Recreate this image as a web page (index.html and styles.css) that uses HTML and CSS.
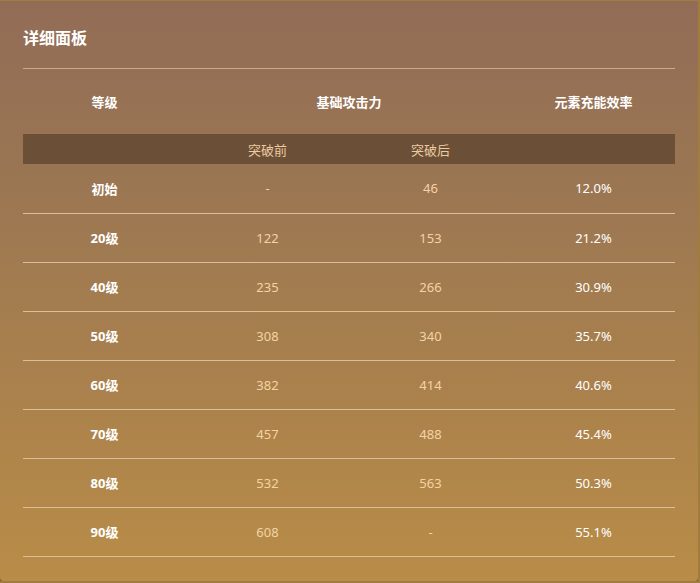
FILE: index.html
```html
<!DOCTYPE html>
<html lang="zh-CN">
<head>
    <meta charset="UTF-8">
    <meta name="viewport" content="width=device-width, initial-scale=1.0">
    <title>详细面板</title>
    <link rel="stylesheet" href="styles.css">
</head>
<body>

    <div class="panel">
        <h2>详细面板</h2>

        <table class="stats">
            <thead>
                <tr class="head">
                    <th>等级</th>
                    <th colspan="2">基础攻击力</th>
                    <th>元素充能效率</th>
                </tr>
                <tr class="sub">
                    <th></th>
                    <th>突破前</th>
                    <th>突破后</th>
                    <th></th>
                </tr>
            </thead>
            <tbody>
                <tr><td class="lv">初始</td><td class="atk">-</td><td class="atk">46</td><td class="er">12.0%</td></tr>
                <tr><td class="lv">20级</td><td class="atk">122</td><td class="atk">153</td><td class="er">21.2%</td></tr>
                <tr><td class="lv">40级</td><td class="atk">235</td><td class="atk">266</td><td class="er">30.9%</td></tr>
                <tr><td class="lv">50级</td><td class="atk">308</td><td class="atk">340</td><td class="er">35.7%</td></tr>
                <tr><td class="lv">60级</td><td class="atk">382</td><td class="atk">414</td><td class="er">40.6%</td></tr>
                <tr><td class="lv">70级</td><td class="atk">457</td><td class="atk">488</td><td class="er">45.4%</td></tr>
                <tr><td class="lv">80级</td><td class="atk">532</td><td class="atk">563</td><td class="er">50.3%</td></tr>
                <tr><td class="lv">90级</td><td class="atk">608</td><td class="atk">-</td><td class="er">55.1%</td></tr>
            </tbody>
        </table>
    </div>

</body>
</html>
```

FILE: styles.css
```css
/* Styling */
* {
    box-sizing: border-box;
    margin: 0;
    padding: 0;
}
body {
    font-family: "Noto Sans", "Noto Sans CJK SC", sans-serif;
    background-color: #a07c3e;
    padding-top: 1px;
}
.panel {
    width: 698px;
    height: 580px;
    padding: 20px 23px 0 23px;
    background: linear-gradient(to bottom, #926c56 0%, #9c7752 35%, #b98c47 100%);
    border-radius: 0 0 4px 4px;
    box-shadow: 0 2px 0 #7a5838;
}
h2 {
    color: #ffffff;
    font-size: 16px;
    font-weight: 700;
    line-height: 34px;
    height: 48px;
    border-bottom: 1px solid #c8aa8e;
}
.stats {
    width: 100%;
    border-collapse: collapse;
    table-layout: fixed;
    font-size: 13px;
}
.stats th,
.stats td {
    text-align: center;
    padding: 0;
}
.head th {
    height: 65px;
    color: #ffffff;
    font-weight: 700;
}
.sub th {
    height: 30px;
    background-color: #6b4f37;
    color: #eccba0;
    font-weight: 400;
}
.stats tbody td {
    height: 49px;
    border-bottom: 1px solid #dcbf98;
}
.lv {
    color: #ffffff;
    font-weight: 700;
}
.atk {
    color: #f3d3a3;
}
.er {
    color: #ffffff;
}
```
